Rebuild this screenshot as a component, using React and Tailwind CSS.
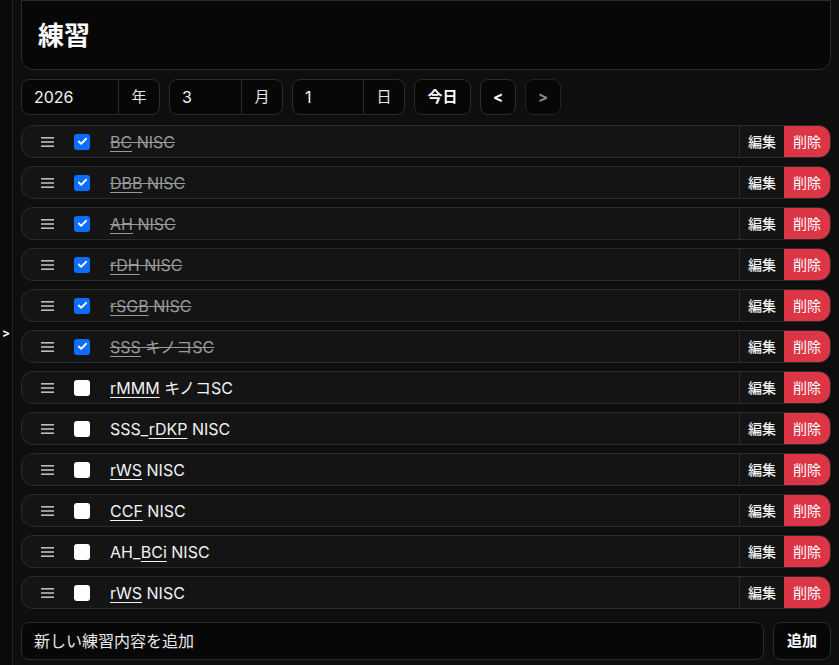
import { Check } from "lucide-react";

const items = [
  { pre: "", link: "BC", post: " NISC", done: true },
  { pre: "", link: "DBB", post: " NISC", done: true },
  { pre: "", link: "AH", post: " NISC", done: true },
  { pre: "", link: "rDH", post: " NISC", done: true },
  { pre: "", link: "rSGB", post: " NISC", done: true },
  { pre: "", link: "SSS", post: " キノコSC", done: true },
  { pre: "", link: "rMMM", post: " キノコSC", done: false },
  { pre: "SSS_", link: "rDKP", post: " NISC", done: false },
  { pre: "", link: "rWS", post: " NISC", done: false },
  { pre: "", link: "CCF", post: " NISC", done: false },
  { pre: "AH_", link: "BCi", post: " NISC", done: false },
  { pre: "", link: "rWS", post: " NISC", done: false },
];

const Hamburger = () => (
  <svg width="13" height="12" viewBox="0 0 13 12" className="text-[#bdbdbd]">
    <rect x="0" y="1" width="13" height="1.6" fill="currentColor" />
    <rect x="0" y="5.2" width="13" height="1.6" fill="currentColor" />
    <rect x="0" y="9.4" width="13" height="1.6" fill="currentColor" />
  </svg>
);

const PracticeRow = ({ item }) => (
  <div className="flex h-[33px] items-stretch rounded-xl border border-[#2b2b2b] bg-[#141414] overflow-hidden">
    <div className="flex w-[52px] items-center pl-[19px]">
      <Hamburger />
    </div>
    <div className="flex w-[36px] items-center">
      {item.done ? (
        <span className="flex h-[16px] w-[16px] items-center justify-center rounded-[3px] bg-[#0d6efd]">
          <Check size={11} strokeWidth={4} color="#fff" />
        </span>
      ) : (
        <span className="h-[16px] w-[16px] rounded-[3px] bg-white" />
      )}
    </div>
    <div
      className={`flex flex-1 items-center text-[16px] ${
        item.done ? "text-[#9a9a9a] line-through" : "text-[#f2f2f2]"
      }`}
    >
      <span>
        {item.pre}
        <span className="underline underline-offset-[3px]">{item.link}</span>
        {item.post}
      </span>
    </div>
    <button className="w-[45px] border-l border-[#2b2b2b] bg-[#141414] text-[14px] font-medium text-[#f2f2f2]">
      編集
    </button>
    <button className="w-[46px] bg-[#dc3545] text-[14px] text-white">削除</button>
  </div>
);

const DateGroup = ({ value, unit, w }) => (
  <div className="flex h-[36px] rounded-lg border border-[#2b2b2b] bg-[#070707]">
    <div className={`flex items-center px-3 text-[16px] text-[#f2f2f2] ${w}`}>{value}</div>
    <div className="flex w-[41px] items-center justify-center border-l border-[#2b2b2b] text-[15px] text-[#e8e8e8]">
      {unit}
    </div>
  </div>
);

export default function App() {
  return (
    <div
      className="flex h-[665px] w-full overflow-hidden bg-[#0e0e0e]"
      style={{ fontFamily: 'Inter, "Noto Sans CJK JP", sans-serif' }}
    >
      <aside className="flex w-[13px] shrink-0 items-center border-r border-[#232323] bg-[#0a0a0a]">
        <span className="ml-[2px] text-[12px] font-bold text-white">&gt;</span>
      </aside>
      <main className="flex flex-1 flex-col px-[8px]">
        <div className="flex h-[70px] items-center rounded-b-xl border border-[#2b2b2b] bg-[#070707] px-[16px]">
          <h1 className="text-[26px] font-bold text-white">練習</h1>
        </div>
        <div className="mt-[9px] flex gap-[9px]">
          <DateGroup value="2026" unit="年" w="w-[96px]" />
          <DateGroup value="3" unit="月" w="w-[71px]" />
          <DateGroup value="1" unit="日" w="w-[70px]" />
          <button className="h-[36px] w-[57px] rounded-lg border border-[#2b2b2b] bg-[#070707] text-[15px] font-bold text-white">
            今日
          </button>
          <button className="h-[36px] w-[36px] rounded-lg border border-[#2b2b2b] bg-[#070707] text-[15px] font-bold text-white">
            &lt;
          </button>
          <button className="h-[36px] w-[36px] rounded-lg border border-[#222] bg-[#070707] text-[15px] font-bold text-[#8a8a8a]">
            &gt;
          </button>
        </div>
        <div className="mt-[10px] flex flex-col gap-[8px]">
          {items.map((el, i) => (
            <PracticeRow key={i} item={el} />
          ))}
        </div>
        <div className="mt-[13px] flex gap-[9px]">
          <div className="flex h-[38px] flex-1 items-center rounded-lg border border-[#2b2b2b] bg-[#070707] px-3 text-[16px] text-[#e8e8e8]">
            新しい練習内容を追加
          </div>
          <button className="h-[38px] w-[58px] rounded-lg border border-[#2b2b2b] bg-[#070707] text-[15px] font-bold text-white">
            追加
          </button>
        </div>
      </main>
    </div>
  );
}
